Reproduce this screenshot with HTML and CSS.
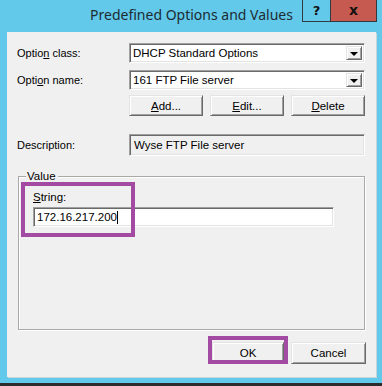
FILE: index.html
```html
<!DOCTYPE html>
<html>
<head>
<meta charset="utf-8">
<link rel="stylesheet" href="styles.css">
</head>
<body>
<div class="window">
  <div class="titlebar">
    <div class="spacer"></div>
    <div class="title">Predefined Options and Values</div>
    <div class="controls">
      <div class="ctl help">?</div>
      <div class="ctl close">x</div>
    </div>
  </div>
  <div class="client">
    <div class="row r1">
      <div class="label">Optio<u>n</u> class:</div>
      <div class="combo"><span class="ctext">DHCP Standard Options</span><span class="dd"><span class="arrow"></span></span></div>
    </div>
    <div class="row r2">
      <div class="label">Opti<u>o</u>n name:</div>
      <div class="combo"><span class="ctext">161 FTP File server</span><span class="dd"><span class="arrow"></span></span></div>
    </div>
    <div class="row btnrow">
      <div class="btn w74"><u>A</u>dd...</div>
      <div class="btn w74"><u>E</u>dit...</div>
      <div class="btn w74"><u>D</u>elete</div>
    </div>
    <div class="row r3">
      <div class="label">Description:</div>
      <div class="desc">Wyse FTP File server</div>
    </div>
    <div class="group">
      <div class="legend">Value</div>
      <div class="strlabel"><u>S</u>tring:</div>
      <div class="input"><span class="itext">172.16.217.200</span><span class="caret"></span></div>
    </div>
    <div class="row footer">
      <div class="btn ok">OK</div>
      <div class="btn cancel">Cancel</div>
    </div>
    <div class="hl hl1"></div>
    <div class="hl hl2"></div>
  </div>
</div>
<div class="taskbar"></div>
</body>
</html>
```

FILE: styles.css
```css
html, body {
  margin: 0;
  padding: 0;
}
body {
  width: 382px;
  height: 386px;
  overflow: hidden;
  background: #ffffff;
  font-family: "Liberation Sans", Arial, sans-serif;
  font-size: 11px;
  color: #000;
}
.window {
  height: 383px;
  box-sizing: border-box;
  background: #62c9ea;
  padding: 0 6px 0 7px;
  display: flex;
  flex-direction: column;
}
.taskbar {
  height: 3px;
  background: #2b2b2b;
}
.titlebar {
  height: 32px;
  display: grid;
  grid-template-columns: 1fr auto 1fr;
  margin: 0 -6px 0 -7px;
}
.title {
  font-family: "Noto Sans", "Open Sans", sans-serif;
  font-size: 14px;
  color: #1c2c32;
  line-height: 32px;
  white-space: nowrap;
  margin-top: -1px;
  padding-left: 1px;
}
.controls {
  justify-self: end;
  align-self: start;
  display: flex;
  margin-right: 5px;
  border: 1px solid #30393d;
  border-top: none;
  height: 21px;
}
.ctl {
  height: 21px;
  display: flex;
  align-items: center;
  justify-content: center;
  font-family: "DejaVu Sans", sans-serif;
  font-weight: bold;
  font-size: 13px;
  color: #111;
}
.help {
  width: 27px;
  border-right: 1px solid #30393d;
  background: #62c9ea;
}
.close {
  width: 45px;
  background: #c75a50;
  font-size: 14px;
  padding-bottom: 2px;
  box-sizing: border-box;
}
.client {
  position: relative;
  width: 369px;
  height: 345px;
  box-sizing: border-box;
  background: #f0f0f0;
  padding: 11px 0 0 10px;
  display: flex;
  flex-direction: column;
  box-shadow: 1px 1px 0 #c8d6db;
}
.row {
  display: flex;
  align-items: center;
}
.label {
  width: 112px;
  flex: none;
}
.r1 { height: 20px; }
.r2 { height: 20px; margin-top: 7px; }
.combo {
  width: 236px;
  height: 20px;
  box-sizing: border-box;
  background: #fff;
  border: 1px solid;
  border-color: #a0a0a0 #ffffff #ffffff #a0a0a0;
  box-shadow: inset 1px 1px 0 #696969, inset -1px -1px 0 #e3e3e3;
  display: flex;
  align-items: center;
  padding: 0 2px 0 3px;
}
.ctext {
  flex: 1;
  white-space: nowrap;
  font-size: 11.5px;
}
.dd {
  width: 16px;
  height: 14px;
  box-sizing: border-box;
  background: #f0f0f0;
  border: 1px solid;
  border-color: #e3e3e3 #696969 #696969 #e3e3e3;
  box-shadow: inset 1px 1px 0 #fff, inset -1px -1px 0 #a0a0a0;
  display: flex;
  align-items: center;
  justify-content: center;
}
.arrow {
  width: 0;
  height: 0;
  border-left: 4px solid transparent;
  border-right: 4px solid transparent;
  border-top: 4px solid #000;
  margin-top: 1px;
}
.btn {
  height: 21px;
  box-sizing: border-box;
  background: #f0f0f0;
  border: 1px solid;
  border-color: #e3e3e3 #696969 #696969 #e3e3e3;
  box-shadow: inset 1px 1px 0 #fff, inset -1px -1px 0 #a0a0a0;
  display: flex;
  align-items: center;
  justify-content: center;
  font-size: 11.5px;
}
.btnrow {
  margin-top: 5px;
  margin-left: 112px;
  gap: 7px;
}
.w74 { width: 74px; }
.r3 {
  margin-top: 18px;
  height: 22px;
}
.desc {
  width: 236px;
  height: 22px;
  box-sizing: border-box;
  border: 1px solid;
  border-color: #a0a0a0 #ffffff #ffffff #a0a0a0;
  box-shadow: inset 1px 1px 0 #696969, inset -1px -1px 0 #e3e3e3;
  padding: 4px 0 0 4px;
  font-size: 11.5px;
}
.group {
  margin-top: 20px;
  margin-left: 1px;
  width: 347px;
  height: 154px;
  box-sizing: border-box;
  border: 1px solid #a9a9a9;
  box-shadow: inset 1px 1px 0 #fff, 1px 1px 0 #fff;
  padding: 0 0 0 14px;
  display: flex;
  flex-direction: column;
}
.legend {
  align-self: flex-start;
  margin: -8px 0 0 -7px;
  padding: 0 2px 0 1px;
  background: #f0f0f0;
  line-height: 14px;
  font-size: 11.5px;
}
.strlabel {
  margin-top: 8px;
  line-height: 13px;
  font-size: 11.5px;
}
.input {
  margin-top: 3px;
  width: 301px;
  height: 20px;
  box-sizing: border-box;
  background: #fff;
  border: 1px solid;
  border-color: #a0a0a0 #ffffff #ffffff #a0a0a0;
  box-shadow: inset 1px 1px 0 #696969, inset -1px -1px 0 #e3e3e3;
  display: flex;
  align-items: center;
  padding-left: 3px;
  font-size: 11.5px;
}
.caret {
  width: 1px;
  height: 13px;
  background: #000;
}
.footer {
  margin-top: 12px;
  margin-left: 195px;
  gap: 7px;
}
.ok { width: 72px; height: 22px; }
.cancel { width: 75px; height: 22px; }
.hl {
  position: absolute;
  box-sizing: border-box;
  border: 4px solid #a34aa3;
}
.hl1 {
  left: 14px;
  top: 150px;
  width: 114px;
  height: 55px;
}
.hl2 {
  left: 201px;
  top: 304px;
  width: 80px;
  height: 28px;
}
```
